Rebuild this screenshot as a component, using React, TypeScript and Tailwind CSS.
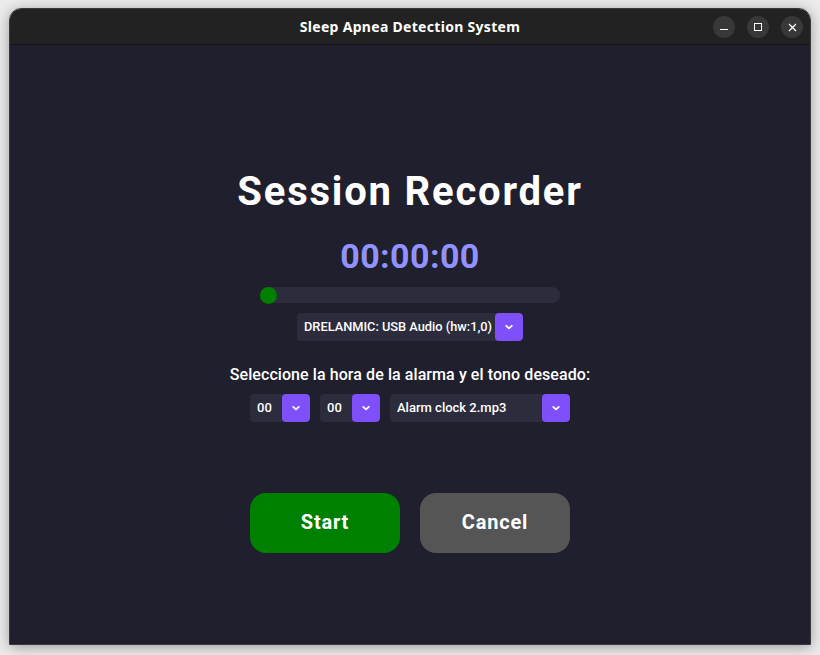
import React from "react";

const Chevron = () => (
  <svg width="10" height="10" viewBox="0 0 10 10" fill="none">
    <path d="M2.2 3.8 L5 6.4 L7.8 3.8" stroke="white" strokeWidth="1.8" strokeLinecap="round" strokeLinejoin="round" />
  </svg>
);

function Select({ label, width, className = "", textClass = "text-[13px]" }: { label: string; width: string; className?: string; textClass?: string }) {
  return (
    <div className={`flex h-[28px] ${width} rounded-[4px] bg-[#2c2c3d] overflow-hidden ${className}`}>
      <div className={`flex-1 flex items-center pl-[7px] font-medium text-white whitespace-nowrap ${textClass}`}>{label}</div>
      <div className="w-[28px] h-full bg-[#7f4ff9] flex items-center justify-center rounded-[4px] shrink-0">
        <Chevron />
      </div>
    </div>
  );
}

export default function App() {
  return (
    <div className="w-[820px] h-[655px] bg-[#ececec] pt-[8px] pl-[9px]" style={{ fontFamily: "Roboto, 'Noto Sans', sans-serif" }}>
      <div className="w-[802px] h-[637px] flex flex-col rounded-t-[12px] overflow-hidden shadow-[0_2px_14px_rgba(0,0,0,0.35)] border border-[#3a3a3a]">
        <div className="h-[35px] bg-[#222222] flex items-center relative shrink-0">
          <div className="flex-1 text-center text-[14px] font-bold text-white tracking-[0.3px]" style={{ fontFamily: "'Noto Sans', sans-serif" }}>
            Sleep Apnea Detection System
          </div>
          <div className="absolute right-[7px] top-[7px] flex gap-[12px]">
            <div className="w-[22px] h-[22px] rounded-full bg-[#383838] flex items-center justify-center">
              <div className="w-[8px] h-[1.5px] bg-white mt-[5px]" />
            </div>
            <div className="w-[22px] h-[22px] rounded-full bg-[#383838] flex items-center justify-center">
              <div className="w-[8px] h-[8px] border border-white" />
            </div>
            <div className="w-[22px] h-[22px] rounded-full bg-[#383838] flex items-center justify-center">
              <svg width="9" height="9" viewBox="0 0 9 9">
                <path d="M1 1 L8 8 M8 1 L1 8" stroke="white" strokeWidth="1.3" />
              </svg>
            </div>
          </div>
        </div>
        <div className="flex-1 bg-[#1f1f2e] border-t border-[#151520] flex flex-col items-center">
          <div className="mt-[123px] text-[40px] leading-[48px] font-bold text-white tracking-[1.8px]">Session Recorder</div>
          <div className="mt-[20px] text-[34px] leading-[40px] font-bold text-[#9292ff] tracking-[0.4px]">00:00:00</div>
          <div className="mt-[11px] w-[300px] h-[16px] rounded-full bg-[#2c2c3d] flex items-center">
            <div className="w-[17px] h-[17px] rounded-full bg-[#008000]" />
          </div>
          <Select label="DRELANMIC: USB Audio (hw:1,0)" width="w-[226px]" className="mt-[10px]" textClass="text-[12.8px]" />
          <div className="mt-[24px] text-[16px] leading-[20px] font-medium text-white tracking-[0.08px]">
            Seleccione la hora de la alarma y el tono deseado:
          </div>
          <div className="mt-[9px] flex gap-[10px]">
            <Select label="00" width="w-[60px]" />
            <Select label="00" width="w-[60px]" />
            <Select label="Alarm clock 2.mp3" width="w-[180px]" />
          </div>
          <div className="mt-[71px] flex gap-[20px]">
            <button className="w-[150px] h-[60px] pb-[3px] rounded-[16px] bg-[#008000] text-white text-[20px] font-bold tracking-[0.8px]">Start</button>
            <button className="w-[150px] h-[60px] pb-[3px] rounded-[16px] bg-[#555555] text-white text-[20px] font-bold tracking-[0.8px]">Cancel</button>
          </div>
        </div>
      </div>
    </div>
  );
}
